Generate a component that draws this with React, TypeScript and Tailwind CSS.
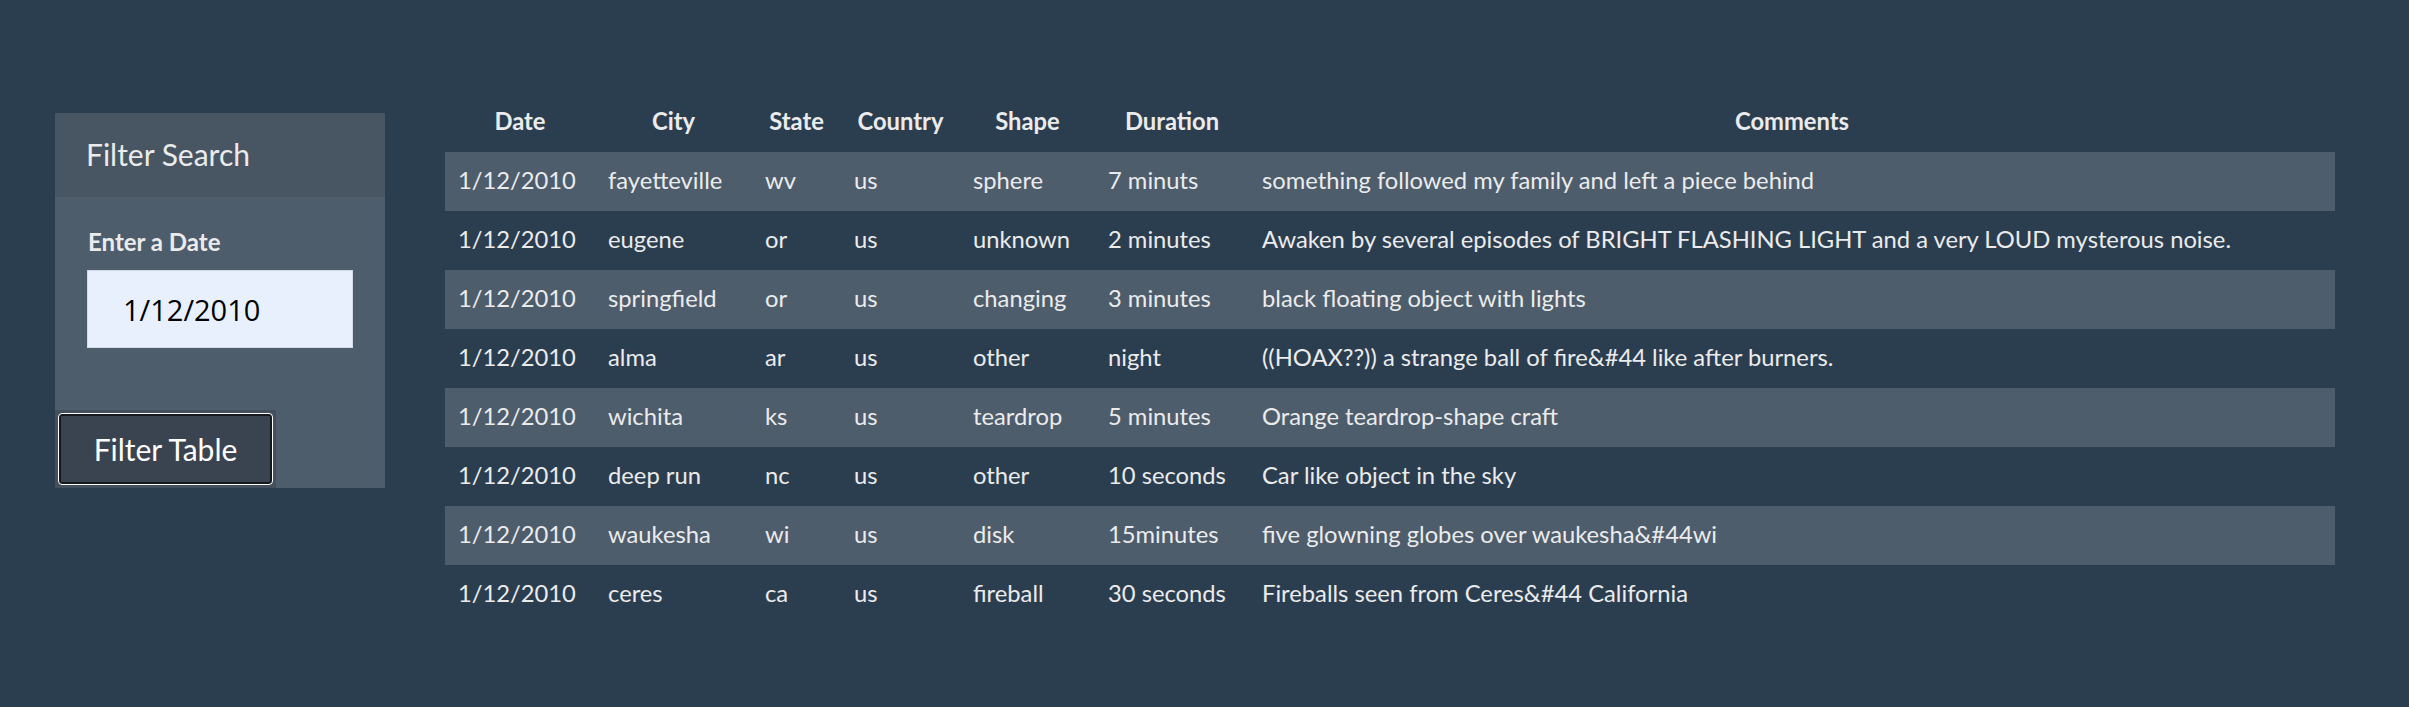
import React, { useState } from 'react';

interface Sighting {
  datetime: string;
  city: string;
  state: string;
  country: string;
  shape: string;
  duration: string;
  comments: string;
}

const data: Sighting[] = [
  { datetime: '1/12/2010', city: 'fayetteville', state: 'wv', country: 'us', shape: 'sphere', duration: '7 minuts', comments: 'something followed my family and left a piece behind' },
  { datetime: '1/12/2010', city: 'eugene', state: 'or', country: 'us', shape: 'unknown', duration: '2 minutes', comments: 'Awaken by several episodes of BRIGHT FLASHING LIGHT and a very LOUD mysterous noise.' },
  { datetime: '1/12/2010', city: 'springfield', state: 'or', country: 'us', shape: 'changing', duration: '3 minutes', comments: 'black floating object with lights' },
  { datetime: '1/12/2010', city: 'alma', state: 'ar', country: 'us', shape: 'other', duration: 'night', comments: '((HOAX??)) a strange ball of fire&#44 like after burners.' },
  { datetime: '1/12/2010', city: 'wichita', state: 'ks', country: 'us', shape: 'teardrop', duration: '5 minutes', comments: 'Orange teardrop-shape craft' },
  { datetime: '1/12/2010', city: 'deep run', state: 'nc', country: 'us', shape: 'other', duration: '10 seconds', comments: 'Car like object in the sky' },
  { datetime: '1/12/2010', city: 'waukesha', state: 'wi', country: 'us', shape: 'disk', duration: '15minutes', comments: 'five glowning globes over waukesha&#44wi' },
  { datetime: '1/12/2010', city: 'ceres', state: 'ca', country: 'us', shape: 'fireball', duration: '30 seconds', comments: 'Fireballs seen from Ceres&#44 California' },
];

const columns = [
  { label: 'Date', width: 'w-[150px]' },
  { label: 'City', width: 'w-[157px]' },
  { label: 'State', width: 'w-[89px]' },
  { label: 'Country', width: 'w-[119px]' },
  { label: 'Shape', width: 'w-[135px]' },
  { label: 'Duration', width: 'w-[154px]' },
  { label: 'Comments', width: 'w-[1086px]' },
];

const FilterPanel: React.FC<{ date: string; onDate: (v: string) => void }> = ({ date, onDate }) => (
  <div className="w-[330px] mt-[113px] shrink-0">
    <div className="h-[84px] bg-[#485563] pl-[31px] pb-[2px] flex items-center text-[30px] text-[#ebebeb]">
      Filter Search
    </div>
    <div className="bg-[#4e5d6c] pt-[27px]">
      <label htmlFor="datetime" className="block pl-[33px] h-[36px] leading-[36px] text-[24px] font-bold text-[#ebebeb] mb-[10px]">
        Enter a Date
      </label>
      <input
        id="datetime"
        type="text"
        value={date}
        onChange={(e) => onDate(e.target.value)}
        className="block ml-[32px] w-[266px] h-[78px] bg-[#e8f0fe] border border-[#d3dae6] pl-[35px] text-[29px] text-black outline-none [font-family:'Open_Sans',sans-serif]"
      />
      <div className="mt-[62px] w-[221px] h-[78px] bg-[#434f5c] p-[3px]">
        <button
          type="button"
          className="block w-full h-full rounded-[4px] border border-white bg-[#3a4450] shadow-[inset_0_0_0_2px_#15191d] text-[30px] text-white"
        >
          Filter Table
        </button>
      </div>
    </div>
  </div>
);

export default function App() {
  const [date, setDate] = useState('1/12/2010');

  return (
    <div className="h-screen overflow-hidden bg-[#2b3e50] flex items-start [font-family:Lato,sans-serif]">
      <div className="ml-[55px]">
        <FilterPanel date={date} onDate={setDate} />
      </div>
      <div className="ml-[60px] mt-[94px]">
        <table className="w-[1890px] table-fixed border-collapse text-[23.75px] text-[#ebebeb]">
          <thead>
            <tr className="h-[58px]">
              {columns.map((c) => (
                <th key={c.label} className={`${c.width} font-bold text-center align-middle pb-[3px]`}>
                  {c.label}
                </th>
              ))}
            </tr>
          </thead>
          <tbody>
            {data.map((row, i) => (
              <tr key={i} className={`h-[59px] ${i % 2 === 0 ? 'bg-[#4e5d6c]' : ''}`}>
                <td className="pl-[13px] pb-[2px] align-middle whitespace-nowrap">{row.datetime}</td>
                <td className="pl-[13px] pb-[2px] align-middle whitespace-nowrap">{row.city}</td>
                <td className="pl-[13px] pb-[2px] align-middle whitespace-nowrap">{row.state}</td>
                <td className="pl-[13px] pb-[2px] align-middle whitespace-nowrap">{row.country}</td>
                <td className="pl-[13px] pb-[2px] align-middle whitespace-nowrap">{row.shape}</td>
                <td className="pl-[13px] pb-[2px] align-middle whitespace-nowrap">{row.duration}</td>
                <td className="pl-[13px] pb-[2px] align-middle whitespace-nowrap">{row.comments}</td>
              </tr>
            ))}
          </tbody>
        </table>
      </div>
    </div>
  );
}
